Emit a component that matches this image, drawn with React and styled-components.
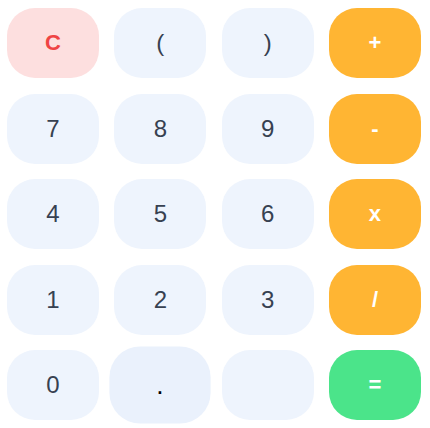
import React from "react";
import styled, { createGlobalStyle, css } from "styled-components";

const GlobalStyle = createGlobalStyle`
  html, body {
    margin: 0;
    padding: 0;
    background: #ffffff;
  }

  body {
    font-family: "Liberation Sans", Arial, sans-serif;
  }
`;

const keys = [
  { label: "C", kind: "clear" },
  { label: "(", kind: "digit" },
  { label: ")", kind: "digit" },
  { label: "+", kind: "op" },
  { label: "7", kind: "digit" },
  { label: "8", kind: "digit" },
  { label: "9", kind: "digit" },
  { label: "-", kind: "op" },
  { label: "4", kind: "digit" },
  { label: "5", kind: "digit" },
  { label: "6", kind: "digit" },
  { label: "x", kind: "op" },
  { label: "1", kind: "digit" },
  { label: "2", kind: "digit" },
  { label: "3", kind: "digit" },
  { label: "/", kind: "op" },
  { label: "0", kind: "digit" },
  { label: ".", kind: "digit", active: true },
  { label: "", kind: "digit" },
  { label: "=", kind: "equals" },
];

const Keypad = () => {
  return (
    <>
      <GlobalStyle />
      <Pad>
        {keys.map((k, i) => (
          <Key key={i} $kind={k.kind} $active={k.active}>
            {k.label}
          </Key>
        ))}
      </Pad>
    </>
  );
};

export default Keypad;

const Pad = styled.div`
  display: grid;
  grid-template-columns: repeat(4, 92px);
  grid-auto-rows: 70px;
  column-gap: 15.33px;
  row-gap: 15.5px;
  padding: 8px 9px 8px 7px;
  width: 430px;
  box-sizing: border-box;
`;

const kinds = {
  digit: css`
    background-color: #eef4fd;
    color: #374151;
    font-weight: 400;
    font-size: 24px;
  `,
  clear: css`
    background-color: #fddfdf;
    color: #ef4444;
    font-weight: 700;
    font-size: 22px;
  `,
  op: css`
    background-color: #ffb533;
    color: #ffffff;
    font-weight: 700;
    font-size: 22px;
  `,
  equals: css`
    background-color: #4be48a;
    color: #ffffff;
    font-weight: 700;
    font-size: 22px;
  `,
};

const Key = styled.button`
  display: flex;
  align-items: center;
  justify-content: center;
  border: none;
  border-radius: 28px;
  padding: 0;
  font-family: "Liberation Sans", Arial, sans-serif;
  ${(p) => kinds[p.$kind]}

  ${(p) =>
    p.$active &&
    css`
      transform: scale(1.1);
      background-color: #eaf1fc;
      color: #000000;
    `}
`;
